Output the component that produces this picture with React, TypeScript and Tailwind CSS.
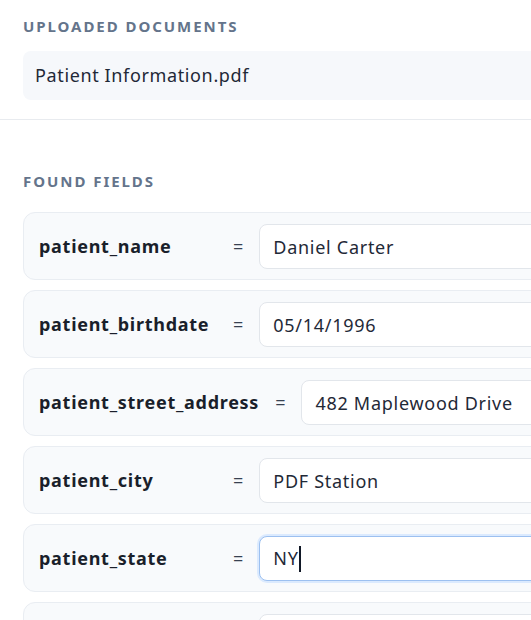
const fields = [
  { key: "patient_name", value: "Daniel Carter" },
  { key: "patient_birthdate", value: "05/14/1996" },
  { key: "patient_street_address", value: "482 Maplewood Drive" },
  { key: "patient_city", value: "PDF Station" },
  { key: "patient_state", value: "NY", focused: true },
  { key: "patient_zip", value: "10001" },
];

const FieldRow = ({
  name,
  value,
  focused,
}: {
  name: string;
  value: string;
  focused?: boolean;
}) => (
  <div className="flex items-center gap-4 rounded-xl border border-[#e9edf2] bg-[#f8fafc] px-[15px] pt-[11px] pb-[10px]">
    <span className="min-w-[178px] whitespace-nowrap text-[18px] font-bold tracking-[0.04em] text-[#1a1f2b]">
      {name}
    </span>
    <span className="text-[18px] text-[#374151]">=</span>
    {focused ? (
      <div className="flex h-[45px] flex-1 items-center rounded-lg border border-[#9cc0f0] bg-white px-[13px] text-[18px] tracking-[0.04em] text-[#1f2937] shadow-[0_0_0_2px_#dbeafe]">
        {value}
        <span className="h-[26px] w-[2px] bg-[#111827]" />
      </div>
    ) : (
      <input
        readOnly
        defaultValue={value}
        className="h-[45px] flex-1 rounded-lg border border-[#e2e6eb] bg-white px-[13px] text-[18px] tracking-[0.04em] text-[#1f2937] outline-none"
      />
    )}
  </div>
);

export default function App() {
  return (
    <div className="h-[620px] w-[531px] overflow-hidden bg-white font-['Noto_Sans',sans-serif]">
      <div className="w-[900px]">
        <section className="px-[23px] pt-[15px] pb-[19px]">
          <h2 className="text-[15px] font-bold tracking-[0.13em] text-[#64748b]">
            UPLOADED DOCUMENTS
          </h2>
          <div className="mt-[13px] flex h-[49px] items-center rounded-lg bg-[#f6f8fb] px-3 text-[18px] tracking-[0.035em] text-[#1f2937]">
            Patient Information.pdf
          </div>
        </section>
        <div className="border-t border-[#e8ebef]" />
        <section className="px-[23px] pt-[50px]">
          <h2 className="text-[15px] font-bold tracking-[0.13em] text-[#64748b]">
            FOUND FIELDS
          </h2>
          <div className="mt-[20px] flex flex-col gap-[10px]">
            {fields.map((f) => (
              <FieldRow
                key={f.key}
                name={f.key}
                value={f.value}
                focused={f.focused}
              />
            ))}
          </div>
        </section>
      </div>
    </div>
  );
}
